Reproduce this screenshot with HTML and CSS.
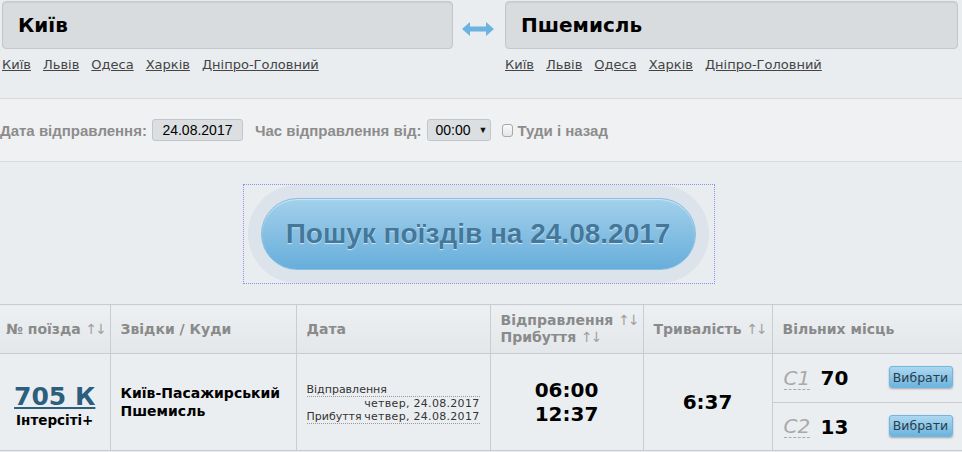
FILE: index.html
```html
<!DOCTYPE html>
<html lang="uk">
<head>
<meta charset="utf-8">
<title>Пошук поїздів</title>
<link rel="stylesheet" href="styles.css">
</head>
<body>
<div class="route">
  <div class="station">
    <div class="city-input">Київ</div>
    <div class="quick-links">
      <a href="#">Київ</a><a href="#">Львів</a><a href="#">Одеса</a><a href="#">Харків</a><a href="#">Дніпро-Головний</a>
    </div>
  </div>
  <div class="swap">
    <svg width="32" height="14" viewBox="0 0 32 14"><path d="M0 7 L8 0 L8 4.5 L24 4.5 L24 0 L32 7 L24 14 L24 9.5 L8 9.5 L8 14 Z" fill="#6db3df"/></svg>
  </div>
  <div class="station">
    <div class="city-input">Пшемисль</div>
    <div class="quick-links">
      <a href="#">Київ</a><a href="#">Львів</a><a href="#">Одеса</a><a href="#">Харків</a><a href="#">Дніпро-Головний</a>
    </div>
  </div>
</div>

<div class="options">
  <span class="opt-label">Дата відправлення:</span>
  <span class="date-field">24.08.2017</span>
  <span class="opt-label time-label">Час відправлення від:</span>
  <span class="time-select">00:00<span class="caret">▼</span></span>
  <span class="checkbox"></span>
  <span class="opt-label">Туди і назад</span>
</div>

<div class="search-area">
  <div class="search-focus">
    <button class="search-btn">Пошук поїздів на 24.08.2017</button>
  </div>
</div>

<table class="trains">
  <colgroup>
    <col class="c1"><col class="c2"><col class="c3"><col class="c4"><col class="c5"><col class="c6">
  </colgroup>
  <thead>
    <tr>
      <th class="first">№ поїзда <span class="sort">↑↓</span></th>
      <th>Звідки / Куди</th>
      <th>Дата</th>
      <th>Відправлення <span class="sort">↑↓</span><br>Прибуття <span class="sort">↑↓</span></th>
      <th>Тривалість <span class="sort">↑↓</span></th>
      <th>Вільних місць</th>
    </tr>
  </thead>
  <tbody>
    <tr>
      <td class="num"><a href="#" class="train-no">705 К</a><div class="train-cat">Інтерсіті+</div></td>
      <td class="stations">Київ-Пасажирський<br>Пшемисль</td>
      <td class="dates">
        <div class="d-line first-line">Відправлення</div>
        <div class="d-date">четвер, 24.08.2017</div>
        <div class="d-line second-line"><span>Прибуття</span><span>четвер, 24.08.2017</span></div>
      </td>
      <td class="times">06:00<br>12:37</td>
      <td class="duration">6:37</td>
      <td class="seats">
        <div class="seat-row"><span class="cls">С1</span><span class="cnt">70</span><button class="pick">Вибрати</button></div>
        <div class="seat-row divider"><span class="cls">С2</span><span class="cnt">13</span><button class="pick">Вибрати</button></div>
      </td>
    </tr>
  </tbody>
</table>
</body>
</html>
```

FILE: styles.css
```css
* { box-sizing: border-box; }

html, body {
  margin: 0;
  padding: 0;
}

body {
  width: 962px;
  height: 452px;
  overflow: hidden;
  background: #e9edf0;
  font-family: "DejaVu Sans", Verdana, sans-serif;
  color: #000;
}

/* ---------- route ---------- */
.route {
  display: grid;
  grid-template-columns: 451px 52px 453px;
  padding: 1px 0 0 2px;
  height: 98px;
}

.city-input {
  height: 48px;
  background: #d9dcdf;
  border: 1px solid #c4c8cc;
  border-radius: 4px;
  box-shadow: inset 0 1px 2px rgba(0, 0, 0, 0.06);
  font-weight: bold;
  font-size: 20px;
  padding-left: 15px;
  display: flex;
  align-items: center;
}

.quick-links {
  display: flex;
  gap: 12px;
  margin-top: 8px;
  font-size: 13px;
}

.quick-links a {
  color: #444;
  text-decoration: underline;
}

.swap {
  display: flex;
  justify-content: center;
  padding-top: 21px;
  padding-right: 2px;
}

/* ---------- options ---------- */
.options {
  height: 64px;
  border-top: 1px solid #d6dadd;
  border-bottom: 1px solid #d6dadd;
  background: #f0f1f3;
  display: flex;
  align-items: center;
  font-family: "Liberation Sans", Arial, sans-serif;
  font-size: 15px;
}

.opt-label {
  font-weight: bold;
  color: #8c8c8c;
}

.date-field {
  margin-left: 5px;
  width: 91px;
  height: 22px;
  background: #dcdfe2;
  border: 1px solid #c2c6ca;
  border-radius: 3px;
  display: flex;
  align-items: center;
  justify-content: center;
  color: #000;
  font-size: 14px;
}

.time-label {
  margin-left: 12px;
}

.time-select {
  margin-left: 6px;
  width: 64px;
  height: 22px;
  background: #dcdfe2;
  border: 1px solid #c2c6ca;
  border-radius: 3px;
  display: flex;
  align-items: center;
  padding-left: 7px;
  color: #000;
  font-size: 14px;
}

.caret {
  font-size: 9px;
  margin-left: 8px;
  color: #111;
}

.checkbox {
  width: 11px;
  height: 13px;
  margin-left: 11px;
  margin-right: 4px;
  border: 1px solid #a8a8a8;
  border-radius: 3px;
  background: linear-gradient(#fafafa, #e6e6e6);
}

/* ---------- search ---------- */
.search-area {
  height: 142px;
  display: flex;
  justify-content: center;
  padding: 23px 5px 0 0;
}

.search-focus {
  width: 470px;
  height: 98px;
  outline: 1px dotted #8f8ff0;
  padding: 13px 16px 0 17px;
}

.search-btn {
  display: block;
  width: 435px;
  height: 72px;
  border: 1px solid #86bfe2;
  border-radius: 36px;
  background: linear-gradient(#a3d0eb, #67aedb);
  box-shadow: 0 0 0 13px #dce3ea, inset 0 1px 1px rgba(255, 255, 255, 0.5);
  font-family: "Liberation Sans", Arial, sans-serif;
  font-weight: bold;
  font-size: 28px;
  color: #44789a;
  text-shadow: 0 1px 1px rgba(225, 240, 250, 0.85);
  padding: 0;
  cursor: pointer;
}

/* ---------- table ---------- */
.trains {
  width: 962px;
  table-layout: fixed;
  border-collapse: collapse;
  font-size: 14px;
}

.c1 { width: 110px; }
.c2 { width: 186px; }
.c3 { width: 194px; }
.c4 { width: 153px; }
.c5 { width: 129px; }
.c6 { width: 190px; }

.trains th,
.trains td {
  border: 1px solid #c9cdd1;
}

.trains tr > :first-child { border-left: none; }
.trains tr > :last-child { border-right: none; }

.trains th {
  height: 49px;
  background: linear-gradient(#edf0f2, #e3e7ea);
  color: #8a8a8a;
  font-weight: bold;
  text-align: left;
  padding: 0 0 0 10px;
  line-height: 17px;
}

.trains th.first {
  padding-left: 6px;
}

.sort {
  font-weight: normal;
  color: #a0a0a0;
  letter-spacing: -2px;
}

.trains td {
  height: 96px;
  background: #ebeef1;
  vertical-align: middle;
}

.num {
  text-align: center;
  padding: 6px 0 0;
}

.train-no {
  font-size: 25px;
  font-weight: bold;
  color: #2c5e7d;
  text-decoration: underline;
  line-height: 30px;
}

.train-cat {
  font-weight: bold;
  font-size: 13.5px;
  line-height: 16px;
}

.stations {
  font-weight: bold;
  padding: 0 0 0 10px;
  line-height: 18px;
}

.dates {
  font-size: 11px;
  color: #333;
  padding: 2px 10px 0 10px;
  line-height: 13px;
}

.d-line {
  border-bottom: 1px dotted #999;
}

.d-date {
  text-align: right;
  letter-spacing: 0.3px;
}

.second-line {
  display: flex;
  justify-content: space-between;
}

.second-line span:last-child {
  letter-spacing: 0.3px;
}

.times {
  text-align: center;
  font-weight: bold;
  font-size: 20px;
  line-height: 24px;
}

.duration {
  text-align: center;
  font-weight: bold;
  font-size: 20px;
}

.trains td.seats {
  padding: 0;
}

.seat-row {
  height: 48px;
  display: flex;
  align-items: center;
  padding-left: 11px;
}

.seat-row.divider {
  border-top: 1px solid #c9cdd1;
}

.cls {
  font-size: 20px;
  font-style: italic;
  color: #a9a9a9;
  border-bottom: 1px dashed #a9a9a9;
  line-height: 22px;
  width: 26px;
}

.cnt {
  font-size: 20px;
  font-weight: bold;
  margin-left: 11px;
  width: 68px;
}

.pick {
  width: 64px;
  height: 22px;
  padding: 0;
  border: 1px solid #76b6dd;
  border-radius: 3px;
  background: linear-gradient(#acd8f1, #6cb4de);
  box-shadow: 0 1px 2px rgba(0, 0, 0, 0.3);
  font-family: "DejaVu Sans", Verdana, sans-serif;
  font-size: 12.5px;
  color: #2b3d4a;
  margin-top: -2px;
}
```
